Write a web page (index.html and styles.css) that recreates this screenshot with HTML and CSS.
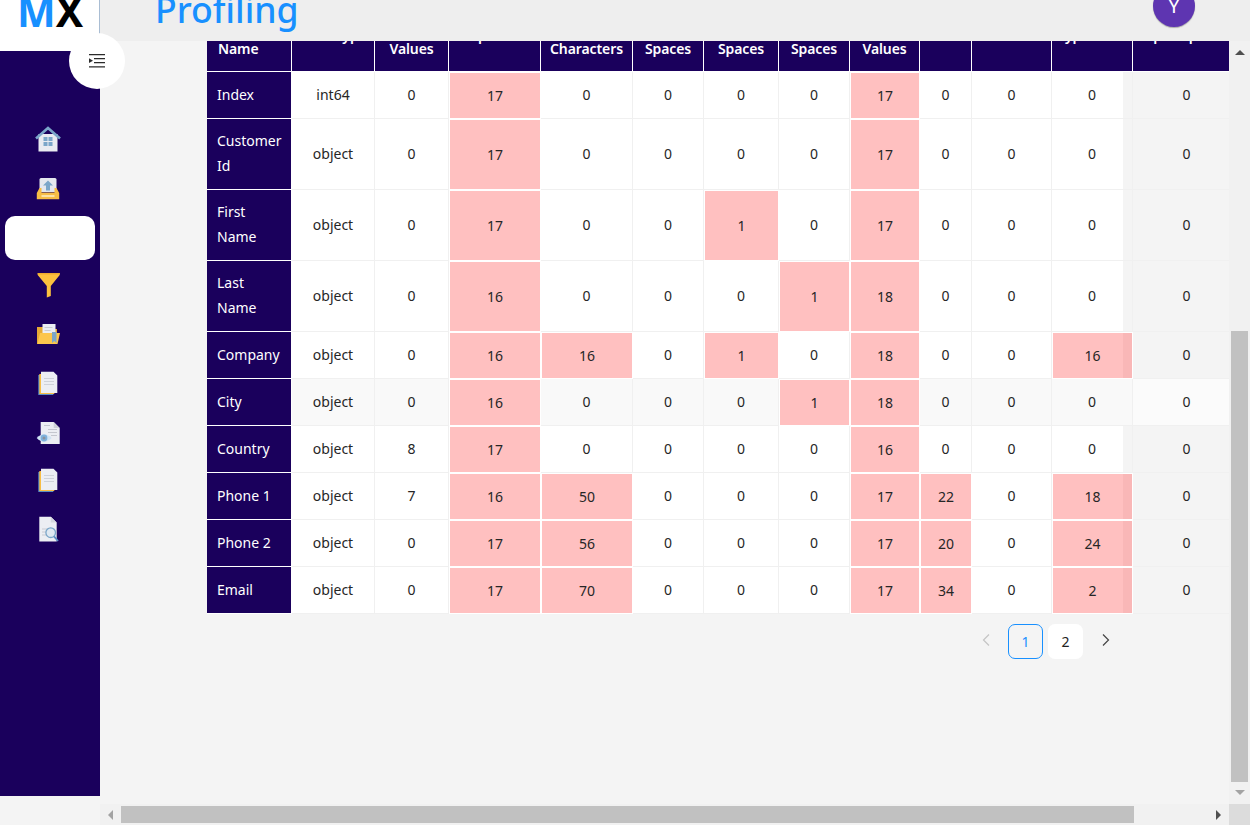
FILE: index.html
```html
<!DOCTYPE html>
<html lang="en">

<head>
    <meta charset="UTF-8" />
    <title>Profiling</title>
    <link rel="stylesheet" href="styles.css">
</head>

<body>
    <div class="app">
        <aside class="side">
            <div class="logo"><span class="logo-m">M</span>X</div>
            <nav class="nav">
                <a class="nav-item">
                    <svg viewBox="0 0 30 30" width="30" height="30">
                        <rect x="5.5" y="9" width="19" height="17.5" fill="#e9ebf1" />
                        <path d="M3 13.5 15 3 27 13.5" fill="none" stroke="#7ba6c9" stroke-width="2.6" />
                        <path d="M10.5 12h4v4h-4zM15.500 12h4v4h-4zM10.500 17h4v4h-4zM15.500 17h4v4h-4z" fill="#7ba6c9" />
                    </svg>
                </a>
                <a class="nav-item">
                    <svg viewBox="0 0 30 30" width="30" height="30">
                        <rect x="6.500" y="4" width="17" height="14" rx="1.500" fill="#e4e7ee" />
                        <path d="M15 6.500 20 11.500h-3v5h-4v-5h-3z" fill="#7ba6c9" />
                        <path d="M3.800 19 6.500 14h2v4.500h13V14h2l2.700 5v6.200H3.800z" fill="#f7bd45" />
                        <rect x="8.500" y="21" width="13" height="2" fill="#fde3a6" />
                    </svg>
                </a>
                <a class="nav-item active"></a>
                <a class="nav-item">
                    <svg viewBox="0 0 30 30" width="30" height="30">
                        <path d="M4.700 2h22v2L17.800 15v10l-4 1.500V15L4.700 4z" fill="#fcc13e" />
                        <path d="M4.700 2h22v1.500h-22z" fill="#eeaa2f" />
                    </svg>
                </a>
                <a class="nav-item">
                    <svg viewBox="0 0 30 30" width="30" height="30">
                        <path d="M4 7h6l2 2h12v15H4z" fill="#e5a936" />
                        <rect x="9.500" y="4" width="13" height="14" fill="#eceef3" />
                        <path d="M11.500 7.500h8M11.500 10.500h6" stroke="#c9ccd4" stroke-width="1" />
                        <path d="M7 13h20l-2.500 11H4.500z" fill="#fcc64d" />
                        <path d="M19 12h4.500v11l-2.250-2-2.250 2z" fill="#7ba6c9" />
                    </svg>
                </a>
                <a class="nav-item">
                    <svg viewBox="0 0 30 30" width="30" height="30">
                        <path d="M5.300 6h15v20h-15z" fill="#5b8ec4" />
                        <path d="M6.300 5h15v20h-15z" fill="#f7bd45" />
                        <path d="M8 2.700h12.500l3.800 3.800v17.500H8z" fill="#eceef3" />
                        <path d="M11 9.500h10M11 12.500h10M11 15.500h10" stroke="#cfd2d9" stroke-width="1" />
                    </svg>
                </a>
                <a class="nav-item">
                    <svg viewBox="0 0 30 30" width="30" height="30">
                        <path d="M7.700 4h13l6 6v16h-19z" fill="#eceef3" />
                        <path d="M20.700 4v6h6z" fill="#cfd2d9" />
                        <path d="M11 7.500h6M15 11.500h9M15 14.500h9M18 17.500h6" stroke="#c4c7cf" stroke-width="1.200" />
                        <path d="M3.700 20Q11 12.500 18.700 20 11 27.500 3.700 20z" fill="#cfe3f4" />
                        <circle cx="11" cy="20" r="3.400" fill="#7fb2dc" />
                        <circle cx="11" cy="20" r="1.500" fill="#8a929c" />
                    </svg>
                </a>
                <a class="nav-item">
                    <svg viewBox="0 0 30 30" width="30" height="30">
                        <path d="M5.300 6h15v20h-15z" fill="#5b8ec4" />
                        <path d="M6.300 5h15v20h-15z" fill="#f7bd45" />
                        <path d="M8 2.700h12.500l3.800 3.800v17.500H8z" fill="#eceef3" />
                        <path d="M11 9.500h10M11 12.500h10M11 15.500h10" stroke="#cfd2d9" stroke-width="1" />
                    </svg>
                </a>
                <a class="nav-item">
                    <svg viewBox="0 0 30 30" width="30" height="30">
                        <path d="M6.300 1.700h11.500l5.900 5.900v18.900H6.300z" fill="#eceef3" />
                        <path d="M17.800 1.700v5.900h5.900z" fill="#d5d8de" />
                        <path d="M9 14h6M9 17h5M9 20h6" stroke="#c9ccd4" stroke-width="1.200" />
                        <circle cx="17.700" cy="17.700" r="4.800" fill="#dfe9f2" stroke="#7ba6c9" stroke-width="1.300" />
                        <path d="M21 21.300 25 26" stroke="#5b8ec4" stroke-width="1.800" />
                    </svg>
                </a>
            </nav>
        </aside>

        <button class="toggle">
            <svg viewBox="0 0 16 14" width="16" height="14">
                <path d="M0 0h16v1.300H0zM5 4h11v1.300H5zM5 8h11v1.300H5zM0 12.200h16v1.300H0z" fill="#2b2b2b" />
                <path d="M0 4.300 4 6.700 0 9.100z" fill="#2b2b2b" />
            </svg>
        </button>

        <div class="main">
            <header class="topbar">
                <h1 class="title">Profiling</h1>
                <div class="avatar">Y</div>
            </header>

            <div class="middle">
                <div class="content">
                    <table class="grid">
                        <colgroup>
                            <col class="c1"><col class="c2"><col class="c3"><col class="c4"><col class="c5"><col class="c6"><col class="c7">
                            <col class="c8"><col class="c9"><col class="c10"><col class="c11"><col class="c12"><col class="c13">
                        </colgroup>
                        <thead>
                            <tr>
                                <th>Column<br>Name</th>
                                <th>Data Type</th>
                                <th>Null<br>Values</th>
                                <th>Duplicates</th>
                                <th>Special<br>Characters</th>
                                <th>Leading<br>Spaces</th>
                                <th>Trailing<br>Spaces</th>
                                <th>Double<br>Spaces</th>
                                <th>Unique<br>Values</th>
                                <th>Min</th>
                                <th>Numeric</th>
                                <th>Type Error</th>
                                <th>Spell Spaces</th>
                            </tr>
                        </thead>
                        <tbody id="rows"></tbody>
                    </table>

                    <div class="pager">
                        <span class="pg-arrow off">
                            <svg viewBox="0 0 10 14" width="10" height="14"><path d="M8 1.500 2.500 7 8 12.500" fill="none" stroke="#c4c4c4" stroke-width="1.200" /></svg>
                        </span>
                        <span class="pg current">1</span>
                        <span class="pg">2</span>
                        <span class="pg-arrow">
                            <svg viewBox="0 0 10 14" width="10" height="14"><path d="M2 1.500 7.500 7 2 12.500" fill="none" stroke="#444" stroke-width="1.200" /></svg>
                        </span>
                    </div>
                </div>

                <div class="vbar">
                    <span class="arrow-up"></span>
                    <div class="vtrack"><div class="vthumb"></div></div>
                    <span class="arrow-down"></span>
                </div>
            </div>

            <div class="hbar">
                <span class="arrow-left"></span>
                <div class="hthumb"></div>
                <span class="arrow-right"></span>
                <div class="corner"></div>
            </div>
        </div>
    </div>

    <script src="app.js"></script>
</body>

</html>
```

FILE: styles.css
```css
* {
    box-sizing: border-box;
}

body {
    margin: 0;
    font-family: "Noto Sans", Arial, sans-serif;
    font-size: 14px;
    color: #262626;
    background: #f4f4f4;
}

.app {
    position: relative;
    display: flex;
    width: 1250px;
    height: 825px;
    overflow: hidden;
}

/* sidebar */
.side {
    width: 100px;
    flex: none;
}

.logo {
    height: 51px;
    background: #fff;
    color: #000;
    font-size: 41px;
    font-weight: 700;
    line-height: 22px;
    padding-left: 17px;
    overflow: hidden;
    box-shadow: inset -1px 0 0 #a9bdd3;
}

.logo-m {
    color: #1890ff;
}

.nav {
    height: 745px;
    background: #1a005c;
    padding: 67px 5px 0;
    display: flex;
    flex-direction: column;
    gap: 4.75px;
}

.nav-item {
    height: 44px;
    display: flex;
    align-items: center;
    padding-left: 28px;
    border-radius: 10px;
}

.nav-item.active {
    background: #fff;
}

.toggle {
    position: absolute;
    left: 69px;
    top: 33px;
    width: 56px;
    height: 56px;
    border: 0;
    padding: 0;
    border-radius: 50%;
    background: #fff;
    display: flex;
    align-items: center;
    justify-content: center;
}

/* top */
.main {
    flex: 1;
    min-width: 0;
    display: flex;
    flex-direction: column;
}

.topbar {
    height: 41px;
    flex: none;
    background: #eee;
    display: flex;
    justify-content: space-between;
    padding: 0 55px 0 55px;
    overflow: hidden;
}

.title {
    margin: 0;
    margin-top: -15px;
    font-size: 35.6px;
    font-weight: 500;
    line-height: 49px;
    color: #1890ff;
}

.avatar {
    width: 42px;
    height: 42px;
    margin-top: -15px;
    border-radius: 50%;
    background: #5e35b1;
    color: #fff;
    font-size: 20px;
    line-height: 42px;
    text-align: center;
    box-shadow: 0 1px 1px #aaa;
}

/* table */
.middle {
    flex: 1;
    min-height: 0;
    display: flex;
}

.content {
    flex: 1;
    min-width: 0;
    overflow: hidden;
    padding-left: 107px;
}

.grid {
    width: 1033px;
    margin-top: -41px;
    table-layout: fixed;
    border-collapse: separate;
    border-spacing: 0;
    line-height: 25px;
}

.c1 { width: 85px; }
.c2 { width: 83px; }
.c3 { width: 74px; }
.c4 { width: 92px; }
.c5 { width: 92px; }
.c6 { width: 71px; }
.c7 { width: 75px; }
.c8 { width: 71px; }
.c9 { width: 70px; }
.c10 { width: 52px; }
.c11 { width: 80px; }
.c12 { width: 81px; }
.c13 { width: 107px; }

.grid th {
    height: 72px;
    padding: 0;
    vertical-align: middle;
    background: #1a005c;
    color: #fff;
    font-weight: 600;
    letter-spacing: -0.1px;
    text-align: center;
    white-space: nowrap;
    border-right: 1px solid #fff;
    border-bottom: 1px solid #fff;
}

.grid th:first-child {
    text-align: left;
    padding-left: 11px;
}

.grid th:last-child {
    border-right: 0;
}

.grid td {
    padding: 9px 0 11px;
    background: #fff;
    text-align: center;
    border-right: 1px solid #f0f0f0;
    border-bottom: 1px solid #f0f0f0;
}

.grid td:first-child {
    background: #1a005c;
    color: #fff;
    text-align: left;
    padding-left: 10px;
    padding-right: 8px;
    border-right: 1px solid #fff;
    border-bottom: 1px solid #fff;
}

.grid td:nth-child(12) {
    background: linear-gradient(to left, #f4f4f4 9px, #fff 9px);
}

.grid td:last-child {
    background: #f4f4f4;
    border-right: 0;
}

.grid td.bad {
    padding: 10px 0;
    background: #ffc0c0;
    border: 1px solid #fff;
}

.grid td.bad:nth-child(12) {
    background: linear-gradient(to left, #f9b7b7 9px, #ffc0c0 9px);
}

.grid tr.alt td {
    background: #f9f9f9;
}

.grid tr.alt td:first-child {
    background: #1a005c;
}

.grid tr.alt td:last-child {
    background: #fbfbfb;
}

.grid tr.alt td.bad {
    background: #ffc0c0;
}

/* pagination */
.pager {
    display: flex;
    justify-content: flex-end;
    gap: 5px;
    margin-top: 10px;
    padding-right: 106px;
}

.pg,
.pg-arrow {
    width: 35px;
    height: 35px;
    border-radius: 7px;
    display: flex;
    align-items: center;
    justify-content: center;
}

.pg {
    background: #fff;
    color: #222;
}

.pg.current {
    background: transparent;
    border: 1px solid #1890ff;
    color: #1890ff;
}

.pg-arrow {
    padding-bottom: 3px;
}

/* fake scrollbars */
.vbar {
    width: 21px;
    flex: none;
    background: #f1f1f1;
    display: flex;
    flex-direction: column;
    align-items: center;
}

.vtrack {
    flex: 1;
    width: 17px;
    padding-top: 268px;
}

.vthumb {
    height: 451px;
    background: #c1c1c1;
}

.arrow-up {
    margin-top: 9px;
    margin-bottom: 8px;
    width: 0;
    height: 0;
    border-left: 5px solid transparent;
    border-right: 5px solid transparent;
    border-bottom: 5px solid #505050;
}

.arrow-down {
    margin: 6px 0 9px;
    width: 0;
    height: 0;
    border-left: 5px solid transparent;
    border-right: 5px solid transparent;
    border-top: 5px solid #a3a3a3;
}

.hbar {
    height: 21px;
    flex: none;
    background: #f1f1f1;
    display: flex;
    align-items: center;
}

.arrow-left {
    margin-left: 8px;
    margin-right: 8px;
    width: 0;
    height: 0;
    border-top: 5px solid transparent;
    border-bottom: 5px solid transparent;
    border-right: 5px solid #a3a3a3;
}

.hthumb {
    width: 1013px;
    height: 17px;
    background: #c1c1c1;
}

.arrow-right {
    margin-left: 82px;
    margin-right: 8px;
    width: 0;
    height: 0;
    border-top: 5px solid transparent;
    border-bottom: 5px solid transparent;
    border-left: 5px solid #505050;
}

.corner {
    width: 21px;
    height: 21px;
    margin-left: auto;
    background: #dcdcdc;
}
```

FILE: app.js
```js
// name, type, then the numeric columns. "!" marks a flagged cell
const rows = [
    ['Index', 'int64', '0', '17!', '0', '0', '0', '0', '17!', '0', '0', '0', '0'],
    ['Customer Id', 'object', '0', '17!', '0', '0', '0', '0', '17!', '0', '0', '0', '0'],
    ['First Name', 'object', '0', '17!', '0', '0', '1!', '0', '17!', '0', '0', '0', '0'],
    ['Last Name', 'object', '0', '16!', '0', '0', '0', '1!', '18!', '0', '0', '0', '0'],
    ['Company', 'object', '0', '16!', '16!', '0', '1!', '0', '18!', '0', '0', '16!', '0'],
    ['City', 'object', '0', '16!', '0', '0', '0', '1!', '18!', '0', '0', '0', '0'],
    ['Country', 'object', '8', '17!', '0', '0', '0', '0', '16!', '0', '0', '0', '0'],
    ['Phone 1', 'object', '7', '16!', '50!', '0', '0', '0', '17!', '22!', '0', '18!', '0'],
    ['Phone 2', 'object', '0', '17!', '56!', '0', '0', '0', '17!', '20!', '0', '24!', '0'],
    ['Email', 'object', '0', '17!', '70!', '0', '0', '0', '17!', '34!', '0', '2!', '0']
];

const tbody = document.getElementById('rows');
rows.forEach((r, i) => {
    const tr = tbody.insertRow();
    if (i === 5) tr.className = 'alt';
    r.forEach(val => {
        const td = tr.insertCell();
        const flagged = val.endsWith('!');
        td.textContent = flagged ? val.slice(0, -1) : val;
        if (flagged) td.className = 'bad';
    });
});
```
